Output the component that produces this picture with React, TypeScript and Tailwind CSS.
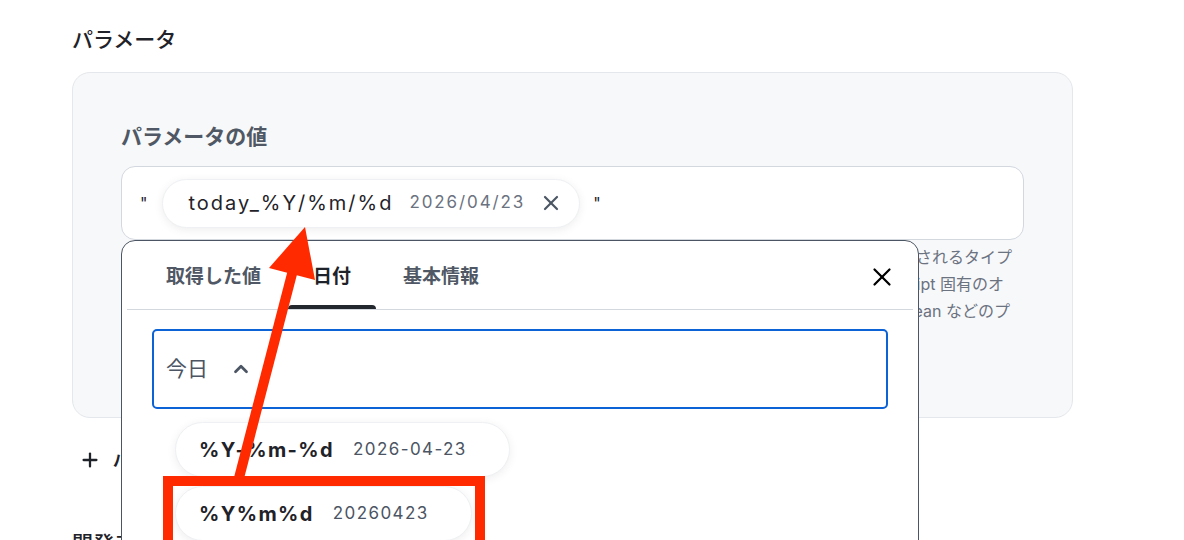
import { X, ChevronUp, Plus } from "lucide-react";

const font = { fontFamily: '"Inter", "Noto Sans CJK JP", sans-serif' };

const helpLines = [
  { text: "値はそのまま JSON として評価され、文字列・数値・真偽値など JSON で表現されるタイプ", pr: "pr-[12px]" },
  { text: "の値を入力できます。Date や Map などの JavaScript 固有のオ", pr: "pr-[20px]" },
  { text: "ブジェクトは使用できません。String、Number、Boolean などのプ", pr: "pr-[14px]" },
];

const formats = [
  { fmt: "%Y-%m-%d", sample: "2026-04-23" },
  { fmt: "%Y%m%d", sample: "20260423" },
];

export default function App() {
  return (
    <div className="relative w-[1184px] h-[540px] overflow-hidden bg-white" style={font}>
      <div className="pl-[72px] pt-[26px]">
        <h2 className="text-[21px] leading-[28px] font-medium text-[#1f2329]">パラメータ</h2>

        <section className="mt-[18px] w-[1001px] h-[346px] rounded-[18px] border border-[#e4e7eb] bg-[#f7f8fa] px-[48px] pt-[50px]">
          <div className="text-[21px] leading-[28px] font-semibold text-[#4f5864]">パラメータの値</div>
          <div className="mt-[15px] h-[74px] rounded-[14px] border border-[#d3d8df] bg-white flex items-center pl-[18px]">
            <span className="text-[16px] text-[#1f2329]">"</span>
            <div className="ml-[15px] h-[49px] rounded-full bg-white border border-[#eef0f3] shadow-[0_2px_10px_rgba(0,0,0,0.07)] flex items-center pl-[25px] pr-[16px]">
              <span className="text-[20px] tracking-[2px] text-[#1f2329]">today_%Y/%m/%d</span>
              <span className="ml-[16px] text-[17px] tracking-[1.9px] text-[#6b7280]">2026/04/23</span>
              <X size={24} strokeWidth={2.2} className="ml-[14px] text-[#4b5563]" />
            </div>
            <span className="ml-[13px] text-[16px] text-[#1f2329]">"</span>
          </div>
          <div className="mt-[4px] flex flex-col items-end text-[16px] leading-[27px] text-[#6b7280] whitespace-nowrap">
            {helpLines.map((l) => (
              <div key={l.text} className={l.pr}>{l.text}</div>
            ))}
          </div>
        </section>

        <div className="mt-[30px] h-[24px] flex items-center gap-[12px] pl-[7px]">
          <Plus size={22} strokeWidth={2.5} className="text-[#1f2329]" />
          <span className="text-[16px] font-semibold text-[#1f2329]">パラメータを追加</span>
        </div>

        <h2 className="mt-[58px] text-[21px] leading-[28px] font-medium text-[#1f2329]">開発者向け設定</h2>
      </div>

      {/* picker popover */}
      <div className="absolute left-[121px] top-[240px] w-[798px] h-[330px] rounded-t-[14px] border border-[#4b5563] bg-white">
        <div className="mx-[5px] h-[69px] border-b border-[#d3d8df] flex items-end justify-between">
          <div className="flex items-end gap-[2px] pl-[14px]">
            <Tab label="取得した値" />
            <Tab label="日付" active />
            <Tab label="基本情報" />
          </div>
          <X size={30} strokeWidth={1.8} className="mb-[17px] mr-[16px] text-black" />
        </div>

        <div className="mx-[30px] mt-[19px] h-[80px] rounded-[5px] border-2 border-[#0b63d6] flex items-center pl-[12px]">
          <span className="text-[21px] text-[#4b5563]">今日</span>
          <ChevronUp size={22} strokeWidth={3} className="ml-[22px] text-[#4b5563]" />
        </div>

        <div className="ml-[53px] mt-[13px] flex flex-col items-start gap-[9px]">
          {formats.map((f) => (
            <div
              key={f.fmt}
              className="h-[55px] rounded-full bg-white border border-[#eef0f3] shadow-[0_2px_10px_rgba(0,0,0,0.07)] flex items-center pl-[23px] pr-[42px]"
            >
              <span className="text-[20px] font-bold tracking-[1.4px] text-[#1f2329]">{f.fmt}</span>
              <span className="ml-[19px] text-[17px] tracking-[1.4px] text-[#4b5563]">{f.sample}</span>
            </div>
          ))}
        </div>
      </div>

      {/* annotation */}
      <div className="absolute left-[163px] top-[476px] w-[322px] h-[80px] border-[10px] border-[#ff2a00]" />
      <svg className="absolute left-0 top-0 pointer-events-none" width="1184" height="540" viewBox="0 0 1184 540">
        <line x1="239" y1="478" x2="293" y2="270" stroke="#ff2a00" strokeWidth="10" />
        <polygon points="305,227 269,268 315,280" fill="#ff2a00" />
      </svg>
    </div>
  );
}

function Tab({ label, active }: { label: string; active?: boolean }) {
  return (
    <div className="relative px-[25px] h-[68px] flex items-center pt-[4px]">
      <span className={`text-[19px] font-semibold ${active ? "text-[#1f2329]" : "text-[#4f5864]"}`}>{label}</span>
      {active && <div className="absolute left-0 right-0 bottom-0 h-[4px] rounded-t-[4px] bg-[#23272e]" />}
    </div>
  );
}
